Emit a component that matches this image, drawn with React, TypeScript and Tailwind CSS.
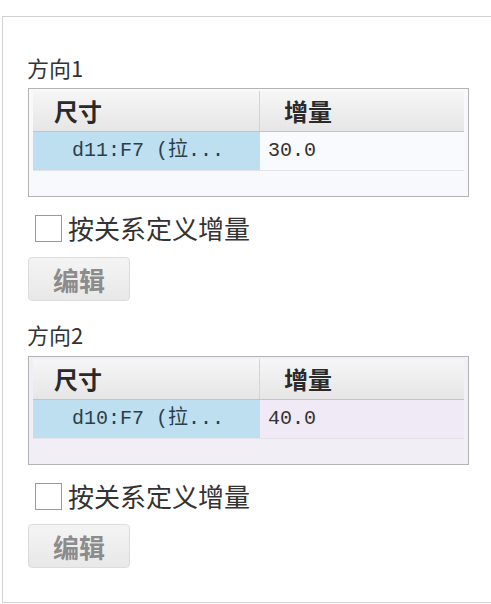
import React from "react";

const cjk = "font-['Noto_Sans_CJK_SC',_'Noto_Sans',_sans-serif]";
const mono = "font-['Liberation_Mono',_'Noto_Sans_CJK_SC',_monospace]";

function DimTable({ dim, val, alt }: { dim: string; val: string; alt?: boolean }) {
  return (
    <div className={`ml-[25px] w-[441px] h-[109px] border border-[#b4b4b4] px-[4px] pt-[2px] ${alt ? "bg-[#f1eef6]" : "bg-[#f8f9fc]"}`}>
      <div className="flex h-[41px] border-b border-[#c4c4c4] bg-gradient-to-b from-[#f6f6f6] to-[#e6e6e6]">
        <div className={`w-[227px] border-r border-[#d4d4d4] pl-[21px] flex items-center text-[24px] font-bold text-[#2a2a2a] ${cjk}`}>尺寸</div>
        <div className={`flex-1 pl-[24px] flex items-center text-[24px] font-bold text-[#2a2a2a] ${cjk}`}>增量</div>
      </div>
      <div className="flex h-[39px] border-b border-[#e2e2e8]">
        <div className={`w-[227px] bg-[#bddff0] pl-[39px] flex items-center text-[20px] text-[#2c3e4c] ${mono}`}>{dim}</div>
        <div className={`flex-1 pl-[8px] flex items-center text-[20px] text-[#333] ${mono} ${alt ? "bg-[#efeaf6]" : "bg-[#f9fafd]"}`}>{val}</div>
      </div>
    </div>
  );
}

function Check() {
  return (
    <div className="flex items-center ml-[32px] h-[28px]">
      <div className="w-[27px] h-[27px] border border-[#9a9a9a] bg-white" />
      <span className={`ml-[6px] text-[26px] leading-[28px] text-[#333] ${cjk}`}>按关系定义增量</span>
    </div>
  );
}

function EditBtn() {
  return (
    <div className={`ml-[25px] w-[102px] h-[44px] rounded-[4px] border border-[#dcdcdc] bg-gradient-to-b from-[#f4f4f4] to-[#e8e8e8] flex items-center justify-center text-[26px] font-bold text-[#8c8c8c] ${cjk}`}>
      编辑
    </div>
  );
}

export default function App() {
  return (
    <div className="w-[491px] h-[604px] bg-white overflow-hidden pt-[16px]">
      <div className="ml-[2px] h-[587px] border-t border-l border-b border-[#d2d2d2] bg-white">
        <div className={`mt-[38px] ml-[24px] h-[24px] leading-[24px] text-[22px] text-[#333] ${cjk}`}>方向1</div>
        <div className="mt-[9px]">
          <DimTable dim="d11:F7 (拉..." val="30.0" />
        </div>
        <div className="mt-[17px]"><Check /></div>
        <div className="mt-[15px]"><EditBtn /></div>
        <div className={`mt-[21px] ml-[24px] h-[24px] leading-[24px] text-[22px] text-[#333] ${cjk}`}>方向2</div>
        <div className="mt-[10px]">
          <DimTable dim="d10:F7 (拉..." val="40.0" alt />
        </div>
        <div className="mt-[17px]"><Check /></div>
        <div className="mt-[14px]"><EditBtn /></div>
      </div>
    </div>
  );
}
